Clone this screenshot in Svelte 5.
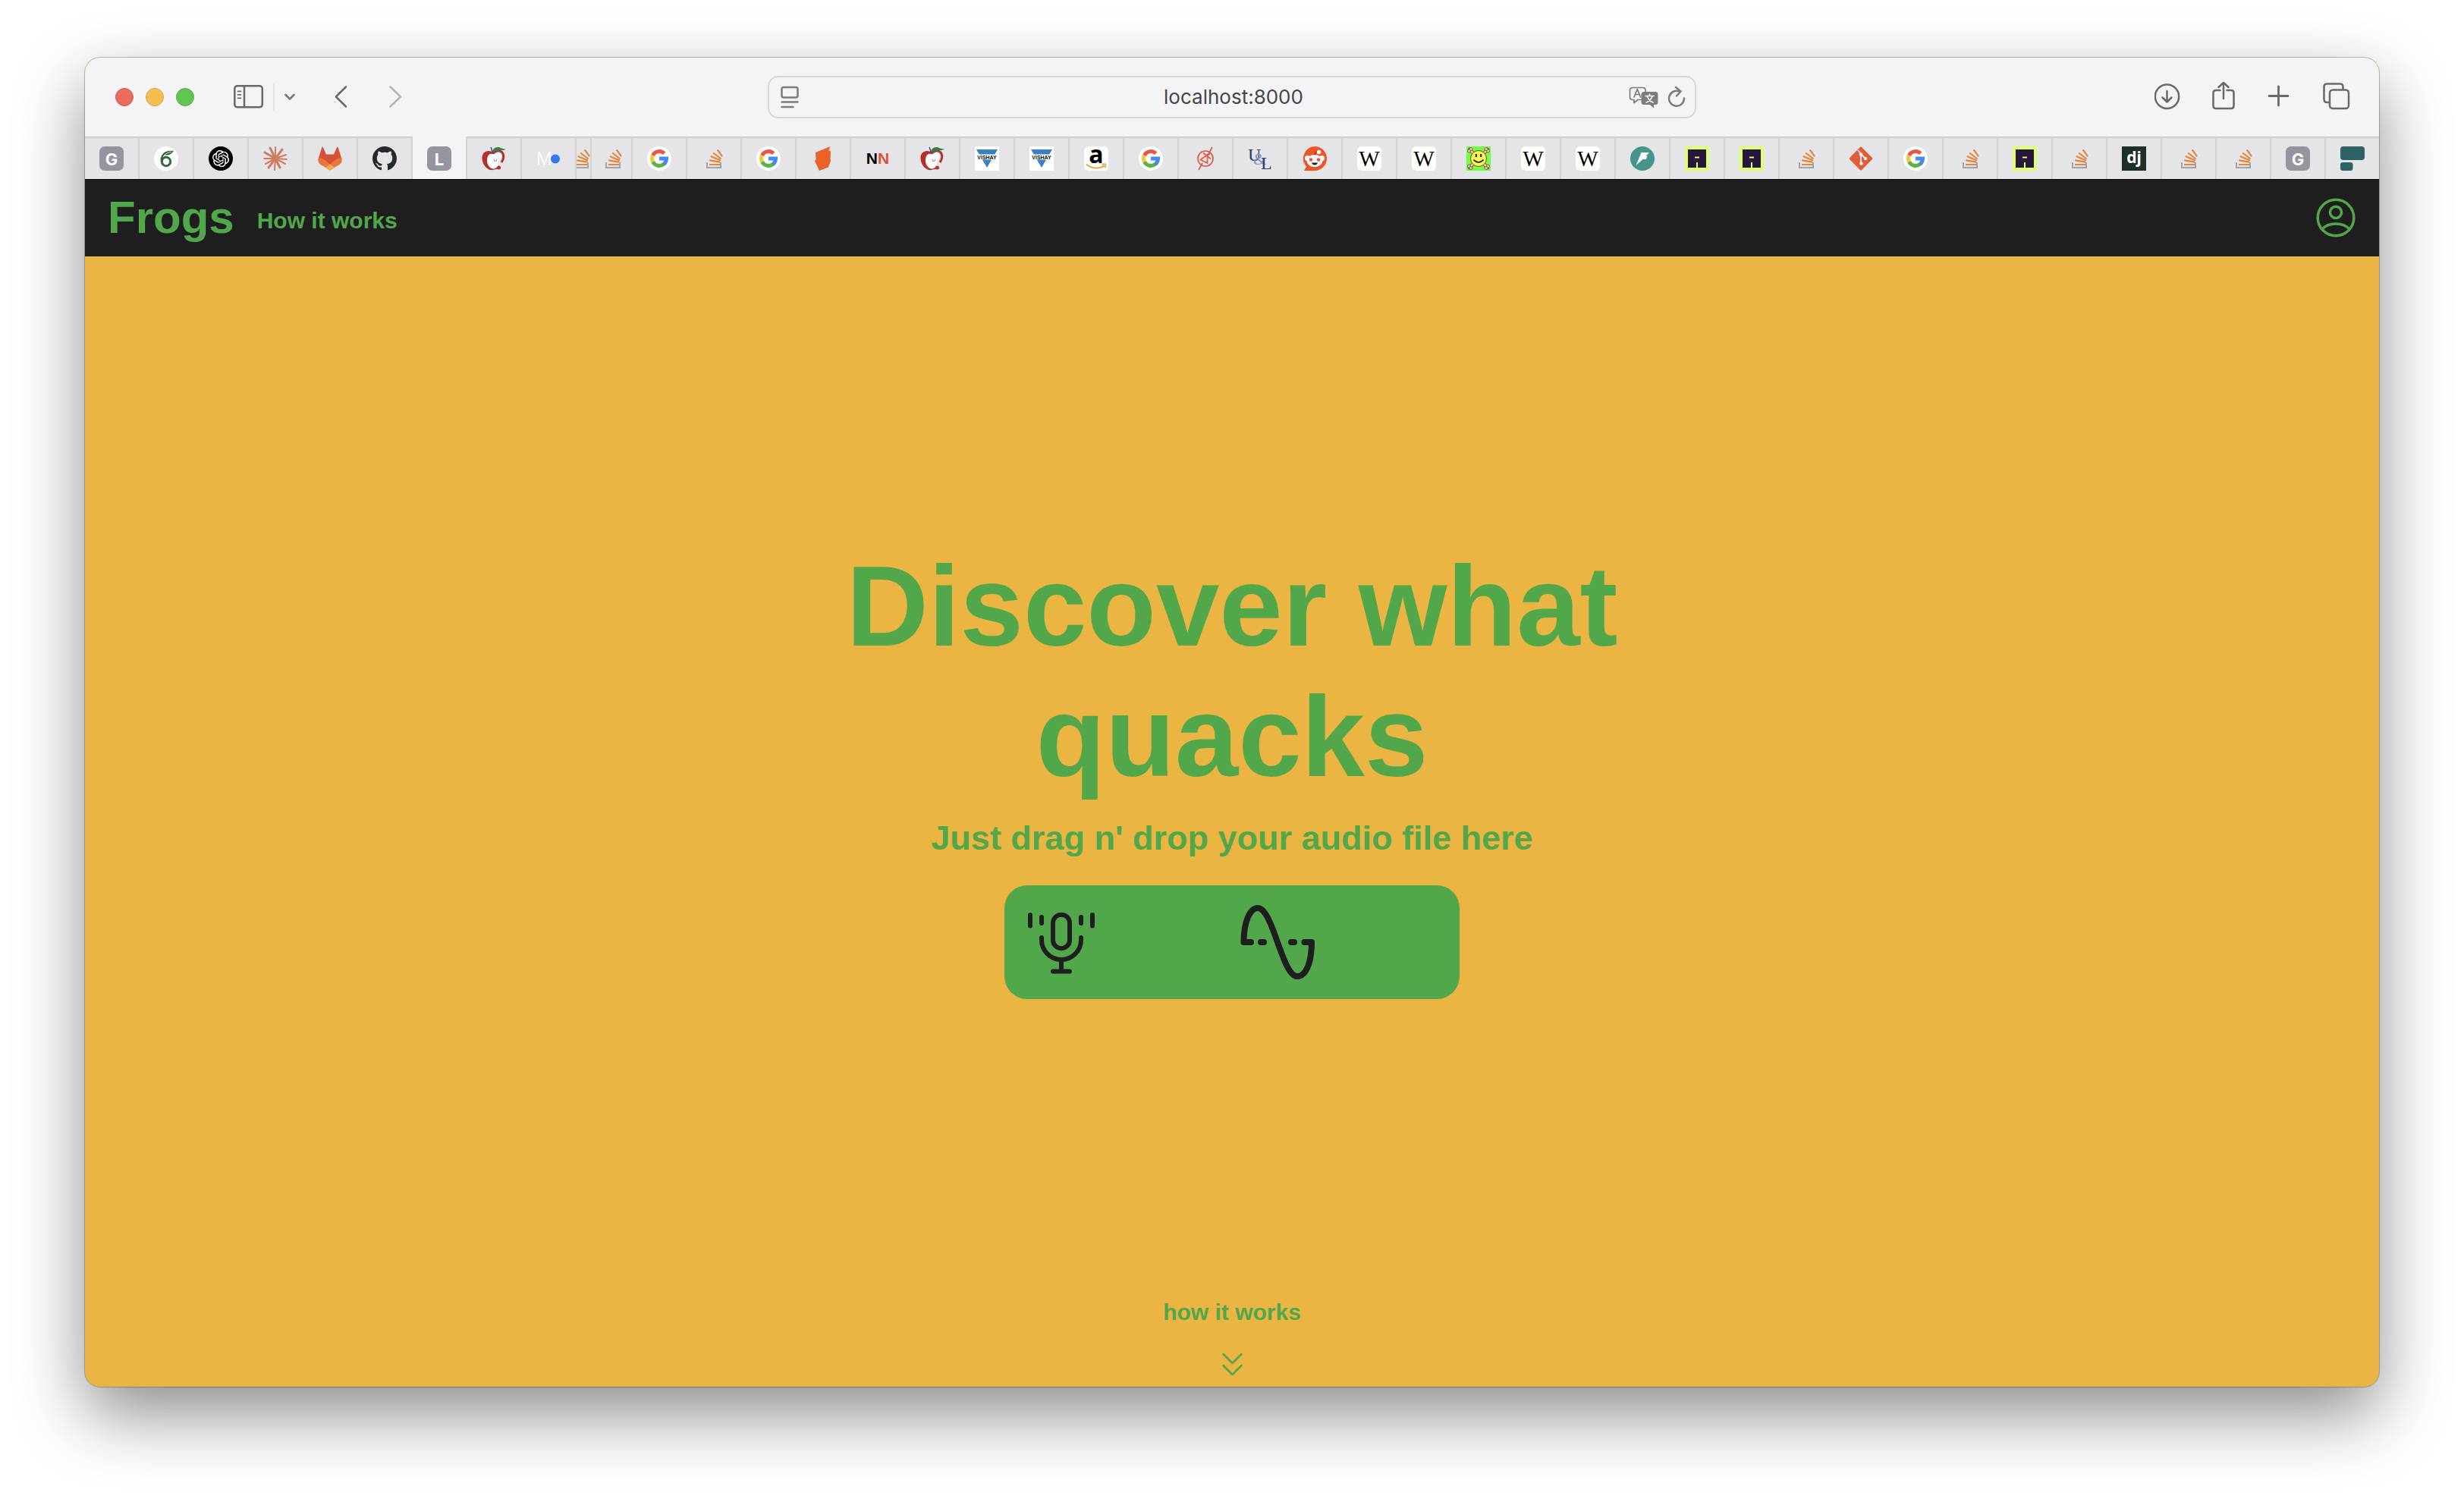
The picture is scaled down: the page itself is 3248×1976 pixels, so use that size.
<script>
  const lead = ['letter-G', 'overleaf', 'openai', 'claude', 'gitlab', 'github', 'letter-L', 'apple', 'mail'];
  const rest = [
    'google', 'stack', 'google', 'origami', 'nn', 'apple', 'vishay', 'vishay', 'amazon', 'google',
    'circuit', 'ul', 'reddit', 'wiki', 'wiki', 'smiley', 'wiki', 'wiki', 'bolt', 'arch', 'arch',
    'stack', 'git', 'google', 'stack', 'arch', 'stack', 'django', 'stack', 'stack', 'letter-G', 'blocks'
  ];
  const tabs = [
    ...lead.map((icon) => ({ icon, size: 'regular' })),
    { icon: 'stack', size: 'sliver' },
    { icon: 'stack', size: 'narrow' },
    ...rest.map((icon) => ({ icon, size: 'regular' }))
  ];
  const activeTab = 6;
  const rays = [
    [16, 1, 2], [25, 4, 3], [30, 11, 2], [31, 17, 2], [29, 23, 2], [22, 28, 3],
    [15, 31, 2], [7, 28, 3], [3, 23, 2], [1, 16, 2], [2, 8, 3], [9, 2, 3]
  ];
  let address = $state('localhost:8000');
</script>

{#snippet favicon(name)}
  <svg class="favicon" viewBox="0 0 32 32" aria-hidden="true">
    {#if name.startsWith('letter-')}
      <rect width="32" height="32" rx="7" fill="#9595a0" />
      <text class="t-letter" x="16" y="25" text-anchor="middle">{name.slice(7)}</text>
    {:else if name === 'overleaf'}
      <circle cx="16" cy="16" r="16" fill="#fff" />
      <circle cx="16" cy="20" r="5.7" fill="none" stroke="#2c6b3c" stroke-width="3" />
      <path d="M10 20C9 14 12 9.500 17 8" fill="none" stroke="#2c6b3c" stroke-width="2.600" />
      <path d="M12 12C13 6 19 5.500 26 6c-3 4-6 6-12 5.500z" fill="#2c6b3c" />
      <path d="M13 12C16 9 19 8 23 7" fill="none" stroke="#fff" stroke-width=".8" />
    {:else if name === 'openai'}
      <circle cx="16" cy="16" r="16" fill="#000" />
      <path transform="translate(5 5) scale(.92)" fill="#fff" d="M22.2819 9.8211a5.9847 5.9847 0 0 0-.5157-4.9108 6.0462 6.0462 0 0 0-6.5098-2.9A6.0651 6.0651 0 0 0 4.9807 4.1818a5.9847 5.9847 0 0 0-3.9977 2.9 6.0462 6.0462 0 0 0 .7427 7.0966 5.98 5.98 0 0 0 .511 4.9107 6.051 6.051 0 0 0 6.5146 2.9001A5.9847 5.9847 0 0 0 13.2599 24a6.0557 6.0557 0 0 0 5.7718-4.2058 5.9894 5.9894 0 0 0 3.9977-2.9001 6.0557 6.0557 0 0 0-.7475-7.0729zm-9.022 12.6081a4.4755 4.4755 0 0 1-2.8764-1.0408l.1419-.0804 4.7783-2.7582a.7948.7948 0 0 0 .3927-.6813v-6.7369l2.02 1.1686a.071.071 0 0 1 .038.052v5.5826a4.504 4.504 0 0 1-4.4945 4.4944zm-9.6607-4.1254a4.4708 4.4708 0 0 1-.5346-3.0137l.142.0852 4.783 2.7582a.7712.7712 0 0 0 .7806 0l5.8428-3.3685v2.3324a.0804.0804 0 0 1-.0332.0615L9.74 19.9502a4.4992 4.4992 0 0 1-6.1408-1.6464zM2.3408 7.8956a4.485 4.485 0 0 1 2.3655-1.9728V11.6a.7664.7664 0 0 0 .3879.6765l5.8144 3.3543-2.0201 1.1685a.0757.0757 0 0 1-.071 0l-4.8303-2.7865A4.504 4.504 0 0 1 2.3408 7.872zm16.5963 3.8558L13.1038 8.364 15.1192 7.2a.0757.0757 0 0 1 .071 0l4.8303 2.7913a4.4944 4.4944 0 0 1-.6765 8.1042v-5.6772a.79.79 0 0 0-.407-.667zm2.0107-3.0231l-.142-.0852-4.7735-2.7818a.7759.7759 0 0 0-.7854 0L9.409 9.2297V6.8974a.0662.0662 0 0 1 .0284-.0615l4.8303-2.7866a4.4992 4.4992 0 0 1 6.6802 4.66zM8.3065 12.863l-2.02-1.1638a.0804.0804 0 0 1-.038-.0567V6.0742a4.4992 4.4992 0 0 1 7.3757-3.4537l-.142.0805L8.704 5.459a.7948.7948 0 0 0-.3927.6813zm1.0976-2.3654l2.602-1.4998 2.6069 1.4998v2.9994l-2.5974 1.4997-2.6067-1.4997Z" />
    {:else if name === 'claude'}
      {#each rays as [x, y, w]}
        <line x1="16" y1="16" x2={x} y2={y} stroke="#cf7d60" stroke-width={w} stroke-linecap="round" />
      {/each}
      <circle cx="16" cy="16" r="4.5" fill="#cf7d60" />
    {:else if name === 'gitlab'}
      <path d="M1 15L5.400 1.200q.7-1.200 1.400 0L11 10.500h10l4.200-9.300q.7-1.200 1.400 0L31 15 16 26z" fill="#d35136" />
      <path d="M1 14.500c-2 5 .5 8 2.500 9.500L16 31l12.500-7c2-1.500 4.500-4.500 2.500-9.500-4 .5-9 4-15 9-6-5-11-8.500-15-9z" fill="#e9763b" />
      <path d="M16 23.200l6 4.600-4.500 3.200q-1.500 1-3 0L10 27.800z" fill="#f0a843" />
    {:else if name === 'github'}
      <path transform="scale(2)" fill="#24292f" d="M8 0C3.580 0 0 3.580 0 8c0 3.540 2.290 6.530 5.470 7.590.4.07.55-.17.55-.38 0-.19-.01-.82-.01-1.490-2.010.37-2.530-.49-2.690-.94-.09-.23-.48-.94-.82-1.130-.28-.15-.68-.52-.01-.53.63-.01 1.080.58 1.230.82.72 1.210 1.870.87 2.330.66.07-.52.28-.87.51-1.070-1.780-.2-3.640-.89-3.640-3.950 0-.87.31-1.590.82-2.150-.08-.2-.36-1.020.08-2.120 0 0 .67-.21 2.200.82.64-.18 1.320-.27 2-.27.68 0 1.360.09 2 .27 1.530-1.040 2.200-.82 2.200-.82.44 1.100.16 1.920.08 2.120.51.56.82 1.270.82 2.150 0 3.070-1.870 3.750-3.650 3.950.29.25.54.73.54 1.480 0 1.070-.01 1.930-.01 2.200 0 .21.15.46.55.38A8.013 8.013 0 0016 8c0-4.420-3.580-8-8-8z" />
    {:else if name === 'apple'}
      <path d="M13 7C6 4 0 9 .5 16c.5 8 6 14 11 15 3 .6 5-1 9-1l-4-22z" fill="#b3302c" />
      <path d="M15 9c3-3 8-4 11.500-1.500C30 11 29 17 26 21" fill="none" stroke="#b3302c" stroke-width="3" />
      <path d="M14 10c3 1 4-1 7-2.500 4 0 5 3 4.500 7-.5 3-5 4-4 8 .5 3-2 7-6 7-5 0-9-6-8.500-12C7.500 12 10 9 14 10z" fill="#fff" />
      <circle cx="22.500" cy="28" r="2.500" fill="#b3302c" />
      <path d="M14 8C14 3 19 0 24 1.500c3 1.500 5 2 8 2C28 7 20 3 14 8z" fill="#2f8049" />
      <path d="M14 8Q13.500 4 12 1" fill="none" stroke="#3b4a7c" stroke-width="1.500" />
      <path d="M16 17l1.500 3M20 17l-1.500 3" stroke="#777" stroke-width="1" />
    {:else if name === 'mail'}
      <text class="t-m" x="0" y="24">M</text>
      <circle cx="25" cy="16.500" r="6" fill="#3478f6" />
    {:else if name === 'stack'}
      <path d="M7 21v7h18v-7" fill="none" stroke="#9fa3ab" stroke-width="2" />
      <path d="M10 24h14M10.300 18.300l14 2.400M11.800 13l13 5.500M15.200 8.500l10.300 8M20.800 4.500l6.300 8.700" stroke="#e3873d" stroke-width="2.200" />
    {:else if name === 'google'}
      <circle cx="16" cy="16" r="16" fill="#fff" />
      <g fill="none" stroke-width="5">
        <path d="M7.800 20.800A9.500 9.500 0 0 1 7.800 11.200" stroke="#f7c644" />
        <path d="M22 23.300A9.500 9.500 0 0 1 7.600 20.400" stroke="#5bb545" />
        <path d="M7.600 11.600A9.500 9.500 0 0 1 22.700 9.300" stroke="#ea5449" />
        <path d="M16 16h9.500A9.500 9.500 0 0 1 21.700 23.600" stroke="#4688f4" />
      </g>
    {:else if name === 'origami'}
      <path d="M6 8L25.500 0l-2 5.500 2.500.5-.5 11 .5 2-3 8.500L11 32 5 19l1.500-2z" fill="#eb6229" />
    {:else if name === 'nn'}
      <text class="t-nn" x="16" y="23" text-anchor="middle">N<tspan fill="#df4e36">N</tspan></text>
    {:else if name === 'vishay'}
      <path d="M0 0h32v32H0z" fill="#fff" />
      <path d="M2 4h28L16 28z" fill="#3a80c4" />
      <path d="M2 10.500h28v7H2z" fill="#fff" />
      <text class="t-vishay" x="16" y="17" text-anchor="middle">VISHAY</text>
    {:else if name === 'amazon'}
      <rect width="32" height="32" rx="6" fill="#fff" />
      <text class="t-a" x="16" y="22" text-anchor="middle">a</text>
      <path d="M3 23.500C10 30 21 30 27 25" fill="none" stroke="#f19d38" stroke-width="2" />
      <path d="M23.500 23.800c3-1 4.500-.8 4.800-.3.400.8-.3 3-1.300 4.500" fill="none" stroke="#f19d38" stroke-width="1.500" />
    {:else if name === 'circuit'}
      <g fill="none" stroke="#dc5b45" stroke-width="1.700">
        <circle cx="16" cy="16" r="10" />
        <path d="M25 1L19 12M7 31l5-9M9.500 17.500l9 4.500V11zM13 8.500l10 8M14 14l8-4" />
      </g>
    {:else if name === 'ul'}
      <text class="t-u" x="0" y="19">U</text>
      <text class="t-amp" x="7" y="24">&amp;</text>
      <text class="t-u" x="17" y="30">L</text>
    {:else if name === 'reddit'}
      <path d="M16 0a16 16 0 1 1 0 32H2l3-5.500A16 16 0 0 1 16 0z" fill="#ec5528" />
      <path d="M16 11.500q1-6 5-5" fill="none" stroke="#333" stroke-width="1" />
      <circle cx="21.500" cy="7.500" r="2.700" fill="#fff" />
      <circle cx="6.500" cy="15.500" r="3.500" fill="#fff" />
      <circle cx="25.500" cy="15.500" r="3.500" fill="#fff" />
      <ellipse cx="16" cy="19" rx="10.500" ry="8" fill="#f4f8fa" />
      <circle cx="11" cy="17.500" r="2.200" fill="#ec5528" />
      <circle cx="21" cy="17.500" r="2.200" fill="#ec5528" />
      <path d="M12 21.500h8q-1 3-4 3t-4-3z" fill="#222" />
    {:else if name === 'wiki'}
      <rect width="32" height="32" rx="6" fill="#fff" />
      <text class="t-w" x="16" y="26" text-anchor="middle">W</text>
    {:else if name === 'smiley'}
      <path d="M0 0h32v32H0z" fill="#75fb4c" />
      <g stroke-linecap="round">
        <path d="M4 4l24 24M28 4L4 28" stroke="#6b4a2b" stroke-width="4.500" />
        <path d="M4 4l24 24M28 4L4 28" stroke="#f3cfae" stroke-width="2.500" />
      </g>
      <g fill="#f3cfae" stroke="#6b4a2b" stroke-width=".8">
        <circle cx="3.500" cy="6" r="2" /><circle cx="6" cy="3.500" r="2" />
        <circle cx="28.500" cy="6" r="2" /><circle cx="26" cy="3.500" r="2" />
        <circle cx="3.500" cy="26" r="2" /><circle cx="6" cy="28.500" r="2" />
        <circle cx="28.500" cy="26" r="2" /><circle cx="26" cy="28.500" r="2" />
      </g>
      <circle cx="16" cy="16" r="10.500" fill="#fdf44d" stroke="#6b5a1b" stroke-width="1" />
      <path d="M12.800 10v4M19.200 10v4" stroke="#111" stroke-width="2" />
      <path d="M9.500 17.500q6.500 7 13 0" fill="none" stroke="#111" stroke-width="1.500" />
    {:else if name === 'bolt'}
      <circle cx="16" cy="16" r="16" fill="#459688" />
      <path d="M14.500 8H25l-4.500 5h2l-2 4h-4L7.500 25z" fill="#fff" />
    {:else if name === 'arch'}
      <path d="M0 0h32v32H0z" fill="#dcff70" />
      <path d="M4 4h24v24H17v-7h-2v7H4z" fill="#27173a" />
      <path d="M13 13.500h6v2h-6z" fill="#dcff70" />
    {:else if name === 'git'}
      <rect x="4.700" y="4.700" width="22.600" height="22.600" rx="1.500" transform="rotate(45 16 16)" fill="#e35c3a" />
      <path d="M12 5l4 4.500v13M17 11l5 5" fill="none" stroke="#f3f3f3" stroke-width="1.800" />
      <g fill="#f3f3f3"><circle cx="16" cy="10.500" r="2.200" /><circle cx="16.500" cy="22.500" r="2.200" /><circle cx="22" cy="16" r="2.200" /></g>
    {:else if name === 'django'}
      <path d="M0 0h32v32H0z" fill="#1c3029" />
      <text class="t-dj" x="16" y="22" text-anchor="middle">dj</text>
    {:else if name === 'blocks'}
      <rect width="32" height="18" rx="4" fill="#2c6166" />
      <rect y="21" width="16.500" height="11" rx="3" fill="#2c6166" />
    {/if}
  </svg>
{/snippet}

<div class="window">
  <header class="toolbar">
    <div class="left">
      <div class="lights">
        <button class="light close" aria-label="Close window"></button>
        <button class="light minimise" aria-label="Minimise window"></button>
        <button class="light zoom" aria-label="Zoom window"></button>
      </div>
      <div class="sidebar-tools">
        <button aria-label="Show sidebar">
          <svg width="40" height="32" viewBox="0 0 40 32">
            <rect x="1.300" y="1.300" width="36.500" height="28" rx="3.500" />
            <path d="M14 1v28" />
            <path d="M5.500 8.300h4M5.500 12.800h4M5.500 17.300h4" stroke-width="1.700" />
          </svg>
        </button>
        <span class="rule"></span>
        <button aria-label="Tab groups">
          <svg class="muted" width="16" height="12" viewBox="0 0 16 12"><path d="M2.500 3l5.500 5.500L13.500 3" stroke-width="2.800" /></svg>
        </button>
      </div>
      <div class="history">
        <button aria-label="Back"><svg width="20" height="32" viewBox="0 0 20 32"><path d="M14 2.500L.8 15.500 14 28.500" /></svg></button>
        <button aria-label="Forward" disabled><svg class="faint" width="20" height="32" viewBox="0 0 20 32"><path d="M2.500 2.500l13.500 13-13.500 13" /></svg></button>
      </div>
    </div>

    <div class="field">
      <button aria-label="Page settings">
        <svg class="muted" width="24" height="30" viewBox="0 0 24 30">
          <rect x="1.500" y="2" width="21" height="13.500" rx="2.500" />
          <path d="M1.500 21.500h21M1.500 28h15" />
        </svg>
      </button>
      <input type="text" aria-label="Address" bind:value={address} />
      <div class="field-tools">
        <button aria-label="Translate">
          <svg class="muted" width="40" height="30" viewBox="0 0 40 30">
            <path d="M17 18.500h-5l-5 4v-4H5q-3.500 0-3.500-3.500V6Q1.500 2.500 5 2.500h13.500Q22 2.500 22 6v2" stroke-width="1.700" />
            <path d="M7 15l4.300-10.500L15.500 15M8.500 11.500h5.500" stroke-width="1.700" />
            <path d="M20 8h15q3.500 0 3.500 3.500v10q0 3.500-3.500 3.500h-2v4.500L28 25h-8q-3.500 0-3.500-3.500v-10Q16.500 8 20 8z" fill="#7c7c7e" stroke="none" />
            <path d="M22 13.500h11M27.500 11v2.500M31 14q-2 6-8 8M24.500 14q2 6 7.500 8" stroke="#f4f4f6" stroke-width="1.700" />
          </svg>
        </button>
        <button aria-label="Reload">
          <svg class="muted" width="24" height="30" viewBox="0 0 24 30">
            <path d="M16 7.600A10 10 0 1 0 22 16.500M11 2l6.500 5.500-5.500 6" />
          </svg>
        </button>
      </div>
    </div>

    <div class="right">
      <button aria-label="Downloads">
        <svg width="36" height="40" viewBox="0 0 36 40"><circle cx="16.500" cy="19.200" r="15.700" /><path d="M16.500 12v14M10.500 20.500l6 6 6-6" /></svg>
      </button>
      <button aria-label="Share">
        <svg width="36" height="40" viewBox="0 0 36 40"><path d="M12.500 11H7q-3.500 0-3.500 3.500v17Q3.500 35 7 35h20q3.500 0 3.500-3.500v-17Q30.500 11 27 11h-5.500M17 22V1M10.500 7L17 .8 23.500 7" /></svg>
      </button>
      <button aria-label="New tab">
        <svg width="36" height="40" viewBox="0 0 36 40"><path d="M15.500 6v25M3 18.500h25" stroke-width="2.800" /></svg>
      </button>
      <button aria-label="Tab overview">
        <svg width="36" height="40" viewBox="0 0 36 40"><rect x="9" y="10.500" width="25" height="24.500" rx="4" /><path d="M8.500 27H5.500Q1.500 27 1.500 23V6.500q0-4 4-4h17q4 0 4 4V9.500" /></svg>
      </button>
    </div>
  </header>

  <nav class="tabs" aria-label="Open tabs">
    {#each tabs as tab, i}
      <button class="tab {tab.size}" class:active={i === activeTab} aria-label="Tab {i + 1}">
        {@render favicon(tab.icon)}
      </button>
    {/each}
  </nav>

  <div class="site-bar">
    <a class="brand" href="#home">Frogs</a>
    <a class="link" href="#how">How it works</a>
    <a class="profile" href="#account" aria-label="Account">
      <svg width="54" height="54" viewBox="0 0 54 54">
        <circle cx="27" cy="27" r="23.800" />
        <circle cx="27" cy="19.800" r="7.600" />
        <path d="M9 42C18 32.800 36 32.800 45 42" />
      </svg>
    </a>
  </div>

  <main>
    <section class="hero">
      <h1>Discover what quacks</h1>
      <p>Just drag n' drop your audio file here</p>
      <div class="drop">
        <button class="mic" aria-label="Record audio">
          <svg width="120" height="120" viewBox="0 0 120 120">
            <rect x="49" y="23.700" width="22" height="44.500" rx="11" />
            <path d="M34 54v3a26 26 0 0 0 52 0v-3M60 84v14M49 98.500h22M34 27v8M86 27v8M19 24v14.500M101 24v14.500" />
          </svg>
        </button>
        <button class="wave" aria-label="Choose an audio file">
          <svg width="120" height="120" viewBox="0 0 120 120">
            <path d="M15.500 60C15.500 32 24 15 34 15C54 15 66 105 86 105C97 105 105 88 105 60H95.500M15.500 60H25M38 60h4M78 60h4" />
          </svg>
        </button>
      </div>
    </section>
    <a class="more" href="#how">
      <span>how it works</span>
      <svg width="30" height="32" viewBox="0 0 30 32"><path d="M3.500 3l12 12 12-12M3.500 18l12 12 12-12" /></svg>
    </a>
  </main>
</div>

<style>
  :global(body) {
    background: #fff;
    font-family: "Liberation Sans", Arial, sans-serif;
  }
  button {
    display: flex;
    padding: 0;
    border: 0;
    background: none;
  }
  a {
    color: inherit;
    text-decoration: none;
  }
  svg {
    display: block;
    flex: none;
    fill: none;
    stroke-linecap: round;
    stroke-linejoin: round;
  }
  .window {
    display: flex;
    flex-direction: column;
    min-height: calc(100vh - 224px);
    margin: 76px 112px 148px;
    border-radius: 20px;
    overflow: hidden;
    background: #eab543;
    box-shadow: 0 0 0 1px rgba(0, 0, 0, 0.25), 0 36px 90px rgba(0, 0, 0, 0.45);
  }
  .toolbar {
    display: grid;
    grid-template-columns: 900fr 1224fr 900fr;
    align-items: center;
    height: 104px;
    background: #f4f4f6;
  }
  .toolbar svg {
    stroke: #69696b;
    stroke-width: 2.5;
  }
  .toolbar .muted {
    stroke: #7c7c7e;
  }
  .toolbar .faint {
    stroke: #b5b5b8;
  }
  .left {
    display: flex;
    align-items: center;
    gap: 52px;
    padding-left: 40px;
  }
  .lights {
    display: flex;
    gap: 16px;
  }
  .light {
    width: 24px;
    height: 24px;
    border: 1px solid #d4564b;
    border-radius: 50%;
    background: #ec6a5e;
  }
  .minimise {
    border-color: #d9a23f;
    background: #f5bf4f;
  }
  .zoom {
    border-color: #52a842;
    background: #61c554;
  }
  .sidebar-tools {
    display: flex;
    align-items: center;
    gap: 12px;
  }
  .rule {
    width: 2px;
    height: 36px;
    background: #e3e3e5;
  }
  .history {
    display: flex;
    gap: 50px;
  }
  .field {
    display: flex;
    align-items: center;
    box-sizing: border-box;
    height: 56px;
    padding: 0 12px 0 15px;
    border: 2px solid #d7d7d9;
    border-radius: 14px;
  }
  .field input {
    flex: 1;
    min-width: 0;
    padding: 0 0 0 52px;
    border: 0;
    outline: 0;
    background: none;
    color: #464648;
    font: 26px/32px Inter, sans-serif;
    text-align: center;
  }
  .field-tools {
    display: flex;
    gap: 11px;
  }
  .right {
    display: flex;
    justify-content: flex-end;
    gap: 38px;
    padding-right: 38px;
  }
  .tabs {
    display: flex;
    height: 56px;
    background: #e5e5e7;
  }
  .tab {
    flex: 72 72 72px;
    box-sizing: border-box;
    min-width: 0;
    padding-top: 2px;
    align-items: center;
    justify-content: center;
    border-right: 2px solid #d2d2d4;
    overflow: hidden;
    box-shadow: inset 0 1px #bebec0, inset 0 3px 2px #dcdcde;
  }
  .tab:last-child {
    flex: 70 70 70px;
    border-right: 0;
  }
  .tab.active {
    background: #f4f4f6;
    box-shadow: none;
  }
  .tab.sliver {
    flex: 20 20 20px;
    padding-right: 6px;
  }
  .tab.narrow {
    flex: 54 54 54px;
    padding-left: 4px;
  }
  .favicon {
    width: 32px;
    height: 32px;
    stroke-linecap: butt;
    stroke-linejoin: miter;
  }
  .t-letter {
    fill: #fff;
    font: 700 22px "Inter", sans-serif;
  }
  .t-m {
    fill: #fff;
    font: 300 23px "Inter", sans-serif;
  }
  .t-nn {
    fill: #000;
    font: 700 21px "Liberation Sans", sans-serif;
  }
  .t-vishay {
    fill: #111;
    font: 700 7px "Liberation Sans", sans-serif;
  }
  .t-a {
    fill: #000;
    font: 700 32px "Open Sans", sans-serif;
  }
  .t-u {
    fill: #2e3e63;
    font: 24px "Liberation Serif", serif;
  }
  .t-amp {
    fill: #8494c8;
    font: 22px "Liberation Serif", serif;
  }
  .t-w {
    fill: #000;
    font: 29px "Liberation Serif", serif;
  }
  .t-dj {
    fill: #fff;
    font: 700 21px "Noto Sans", sans-serif;
  }
  .site-bar {
    display: flex;
    align-items: center;
    gap: 30px;
    box-sizing: border-box;
    height: 102px;
    padding: 0 30px 2px;
    border-top: 1px solid #000;
    background: #1e1e1e;
    color: #52a74b;
    font-weight: 700;
  }
  .brand {
    font-size: 60px;
    line-height: 70px;
  }
  .link {
    padding-top: 8px;
    font-size: 30px;
    line-height: 34px;
  }
  .profile {
    margin-left: auto;
  }
  .profile svg {
    stroke: #52a74b;
    stroke-width: 3.5;
  }
  main {
    display: flex;
    flex: 1;
    flex-direction: column;
    color: #52a74b;
    font-weight: 700;
  }
  .hero {
    display: flex;
    flex: 1;
    flex-direction: column;
    align-items: center;
    justify-content: center;
    text-align: center;
  }
  h1 {
    max-width: 1200px;
    margin: 0;
    font-size: 150px;
    line-height: 172px;
  }
  p {
    margin: 21px 0 36px;
    font-size: 45px;
    line-height: 53px;
  }
  .drop {
    display: flex;
    box-sizing: border-box;
    width: 600px;
    padding: 15px;
    border-radius: 30px;
    background: #52a74b;
  }
  .drop svg {
    stroke: #1e1e1e;
    stroke-width: 6;
  }
  .drop .wave {
    flex: 1;
    justify-content: center;
  }
  .drop .wave svg {
    stroke-width: 8;
  }
  .more {
    display: flex;
    flex-direction: column;
    align-items: center;
    gap: 35px;
    align-self: center;
    padding: 21px 0 14px;
    font-size: 30px;
    line-height: 34px;
  }
  .more svg {
    stroke: #52a74b;
    stroke-width: 2.5;
  }
</style>
